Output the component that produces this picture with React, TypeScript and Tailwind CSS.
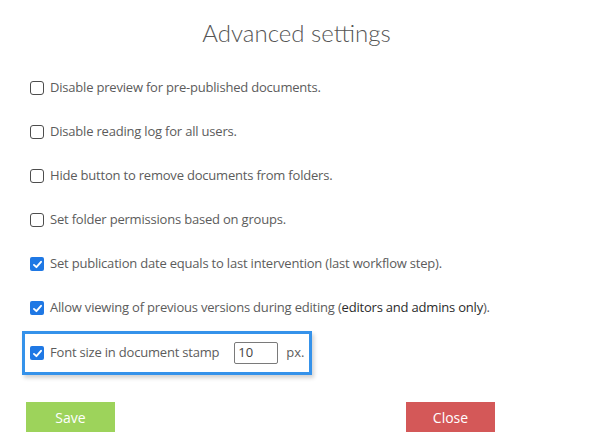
import React from 'react';

const FONT = { fontFamily: '"Open Sans", "Noto Sans", sans-serif' };

const Box = ({ checked }: { checked: boolean }) =>
  checked ? (
    <span className="flex h-[14px] w-[14px] shrink-0 items-center justify-center rounded-[2px] bg-[#1f78e4]">
      <svg viewBox="0 0 14 14" className="h-[11px] w-[11px]">
        <polyline points="2.5,7.5 5.6,10.4 11.5,3.6" fill="none" stroke="#fff" strokeWidth="2.4" strokeLinecap="round" strokeLinejoin="round" />
      </svg>
    </span>
  ) : (
    <span className="h-[14px] w-[14px] shrink-0 rounded-[3px] border border-[#4d4d4d] bg-white" />
  );

const rows: { checked: boolean; label: React.ReactNode }[] = [
  { checked: false, label: 'Disable preview for pre-published documents.' },
  { checked: false, label: 'Disable reading log for all users.' },
  { checked: false, label: 'Hide button to remove documents from folders.' },
  { checked: false, label: 'Set folder permissions based on groups.' },
  { checked: true, label: 'Set publication date equals to last intervention (last workflow step).' },
  {
    checked: true,
    label: (
      <>
        Allow viewing of previous versions during editing (
        <span className="text-[#2b2b2b]">editors and admins only</span>).
      </>
    ),
  },
];

export default function App() {
  return (
    <div className="h-[446px] w-[593px] bg-white text-[13px] text-[#5c5c5c]" style={FONT}>
      <h1
        className="pt-[17px] text-center text-[24px] font-light leading-[32px] text-[#555]"
        style={{ fontFamily: 'Lato, "Open Sans", sans-serif' }}
      >
        Advanced settings
      </h1>

      <div className="mt-[17px] pl-[30px]">
        {rows.map((r, i) => (
          <div key={i} className="flex h-[44px] items-center gap-[6px] tracking-[-0.2px]">
            <Box checked={r.checked} />
            <span className="whitespace-nowrap">{r.label}</span>
          </div>
        ))}

        <div className="-ml-[8px] mt-[1px] flex h-[44px] w-[290px] items-center gap-[6px] border-[3px] border-[#3592ea] pl-[5px] shadow-[2px_3px_4px_rgba(0,0,0,0.18)]">
          <Box checked />
          <span className="whitespace-nowrap tracking-[-0.2px]">Font size in document stamp</span>
          <span className="ml-[9px] flex h-[22px] w-[44px] items-center rounded-[2px] border border-[#7a7a7a] pl-[3px] text-[#444]">10</span>
          <span className="ml-[2px]">px.</span>
        </div>
      </div>

      <div className="ml-[26px] mt-[27px] flex w-[469px] justify-between text-[14px] text-white">
        <button className="h-[30px] w-[89px] bg-[#9dd35b]">Save</button>
        <button className="h-[30px] w-[89px] bg-[#d45858]">Close</button>
      </div>
    </div>
  );
}
